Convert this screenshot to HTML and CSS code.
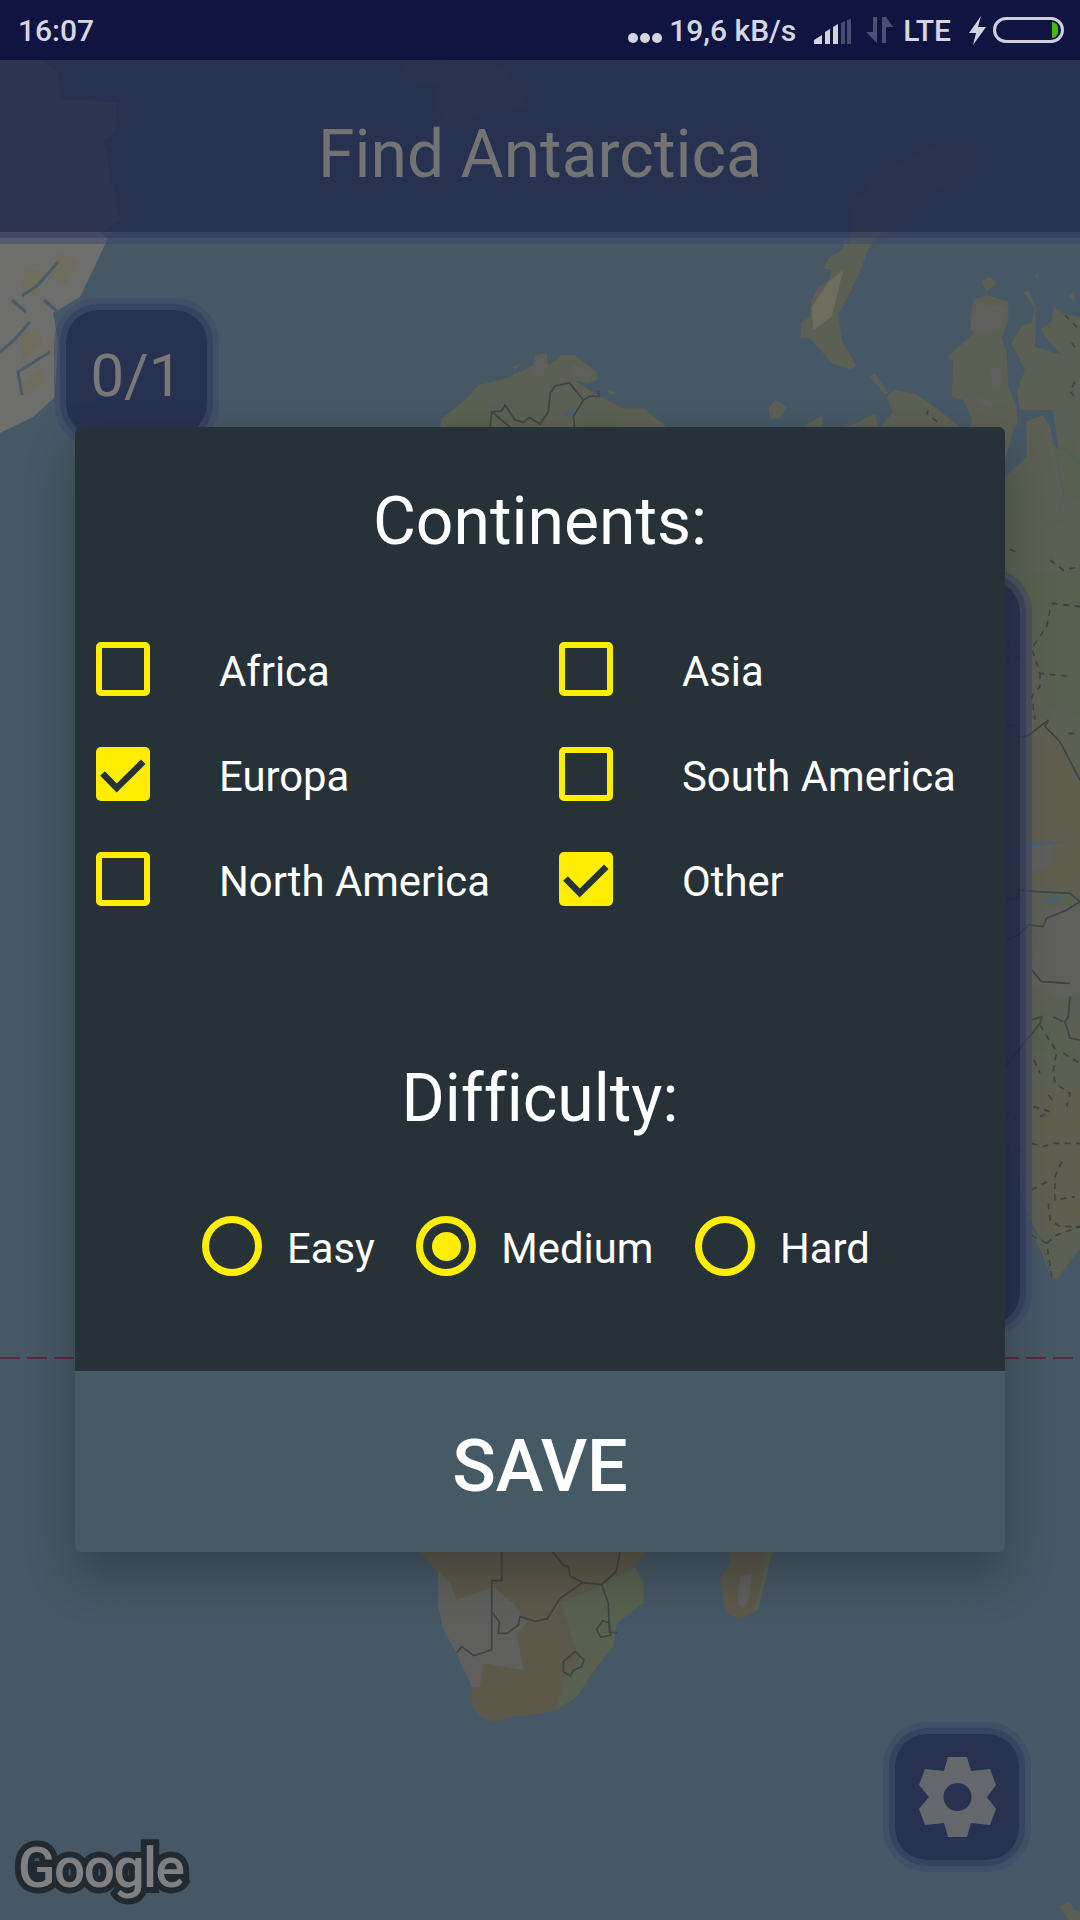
FILE: index.html
```html
<!DOCTYPE html>
<html lang="en">
<head>
  <meta charset="UTF-8">
  <title>Find Antarctica</title>
  <link rel="stylesheet" href="styles.css">
</head>
<body>
  <div class="screen">
    <!-- map behind everything -->
    <svg class="map" width="1080" height="1920" viewBox="0 0 1080 1920">
      <!-- greenland -->
      <path class="ice" d="M0 60H40L56 70L60 100L86 100L117 103L114 133L103 140L120 220L100 233L108 238L93 270L80 297L53 313L58 340L55 397L33 417L0 433Z"/>
      <path class="tan" d="M58 250L78 262L66 285L50 278ZM26 268L44 272L38 296L20 290ZM20 335L38 328L42 346L22 360ZM40 365L46 380L26 395L22 384Z"/>
      <path class="fjord" d="M44 300L58 312M58 262L38 285L22 296M0 352L14 340L30 322M22 395L18 372L50 352M12 300L26 312"/>
      <!-- svalbard and the arctic islands under the bar -->
      <path class="land" d="M400 62L413 83L441 83L434 103L448 127L482 113L530 107L503 67L475 60Z"/>
      <path class="land" d="M850 244L855 200L890 170L945 143L970 145L968 170L905 210L870 245Z"/>
      <!-- scandinavia above the dialog -->
      <g transform="translate(400 340) scale(.33333)">
        <path class="land" d="M120 270L125 235L190 185L235 135L260 130L320 115L400 75L405 45L440 40L445 75L470 60L480 45L525 45L590 95L590 120L560 130L520 120L610 175L670 205L730 205L810 270ZM335 80L365 70L345 90ZM625 150L650 158L630 165Z"/>
        <path class="green" d="M190 190L250 170L300 230L270 270L130 270ZM540 210L660 210L670 270L530 270Z"/>
        <path class="grey" d="M410 60L440 50L430 110L380 110ZM520 70L585 100L560 125L510 100Z"/>
        <path class="water" d="M490 225L525 200L520 230Z"/>
        <path class="line" d="M270 270L275 215L305 213L315 195L345 240L370 248L388 232L420 252L445 215L450 160L465 138L508 128L550 180L520 230L525 270M550 180L570 168L597 170L595 152M275 215L340 270"/>
      </g>
      <!-- top right, traced at 3x -->
      <g transform="translate(760 240) scale(.33333)">
        <path class="land" d="M250 10L330 15L300 95L255 190L235 220L245 300L290 378L270 388L215 370L190 340L150 295L122 295L122 250L150 230L155 180L175 140L205 125L215 90L190 85L210 50L250 30Z"/>
        <path class="tan" d="M205 125L250 90L235 150L215 230L160 270L155 200Z"/>
        <path class="land" d="M330 410L345 400L385 460L375 465ZM25 505L45 480L80 500L60 535L30 535ZM130 560L190 525L185 560ZM240 560L290 550L345 520L355 560ZM665 125L690 110L710 130L680 155ZM925 170L940 155L945 185ZM825 108L840 102L830 115Z"/>
        <path class="land" d="M365 560L398 515L380 470L405 450L460 460L510 490L600 560Z"/>
        <path class="land" d="M565 350L640 280L630 240L640 180L680 165L745 185L745 240L725 295L740 340L745 440L770 500L772 550L760 570L735 660L735 800L400 800L632 560L635 535L610 480L575 470L580 365Z"/>
        <path class="land" d="M755 310L785 255L815 250L825 205L790 155L805 152L828 205L825 320L905 345L850 285L845 265L875 245L880 200L920 225L960 230L960 960L735 960L735 710L800 650L800 560L795 545L850 525L870 560L880 610L895 630L880 510L800 510L780 510L770 460L795 390Z"/>
        <path class="grey" d="M650 190L735 200L730 260L680 280L630 270ZM690 380L730 380L725 440L695 445ZM650 465L700 490L690 505L655 490Z"/>
        <path class="green" d="M735 745L800 755L790 810L735 790ZM885 640L930 590L960 650L960 780L915 770L905 680ZM850 860L900 810L915 850Z"/>
        <path class="fjord" d="M885 625L920 630L960 670M890 650L900 710L912 760L900 810"/>
        <path class="dash" d="M915 225L960 270M935 310L945 322M945 425L930 455L945 470M505 510L500 520L540 552M750 928L800 950L870 955"/>
      </g>
      <!-- central asia strip -->
      <g transform="translate(960 560) scale(.33333)">
        <path class="land" d="M130 -20H360V1210H130Z"/>
        <path class="green" d="M130 50L360 30L360 470L260 440L240 300L130 210Z"/>
        <path class="desert" d="M130 530L260 500L360 650L360 990L130 990Z"/>
        <path class="grey" d="M200 860L280 850L280 910L200 940ZM260 1040L360 1040L360 1200L220 1200Z"/>
        <path class="water" d="M165 880L200 845L330 845L250 855L205 860L190 900ZM255 1015L300 1012L285 1030L265 1028Z"/>
        <path class="line" d="M135 490L175 505L170 530L200 530L265 480L255 500L300 545L360 660M132 1015L170 1018L175 990L230 995L330 1000L360 1025L320 1050L260 1075L250 1100L205 1095L175 1125L132 1142"/>
        <path class="dash" d="M270 0L310 30L360 20M275 130L360 140M270 150L260 200L215 265L240 340L335 350M240 340L240 380L215 410L225 480M325 520L345 520M132 250L175 250M132 295L180 290"/>
      </g>
      <!-- india -->
      <g transform="translate(960 960) scale(.33333)">
        <path class="land" d="M130 0L360 0L360 870L340 890L290 960L275 950L250 850L215 790L135 520L130 520Z"/>
        <path class="desert" d="M215 380L360 380L360 800L290 830L240 780L215 600Z"/>
        <path class="green" d="M215 130L290 200L360 290L360 320L290 270L215 280ZM215 810L250 850L270 950L255 900Z"/>
        <path class="grey" d="M215 0L360 0L360 100L290 120L215 70Z"/>
        <path class="line" d="M215 30L245 65L330 70M330 110L325 170L315 185L330 235L360 240M280 170L310 185M132 325L180 265L240 190L245 170L215 180"/>
        <path class="dash" d="M240 195L290 275L280 330L285 370L330 400L320 440M310 280L360 310M215 550L250 560L280 550L360 550M305 605L285 650L285 720L345 710M215 690L270 660M265 730L270 780L300 800L360 800M215 825L260 850L275 950M260 850L290 825L360 800M220 440L270 455L230 475M222 300L240 340M132 450L170 480M265 405L285 430M140 590L180 570"/>
        <path class="sea" d="M132 530L180 720L215 790L215 1100L132 1100Z"/>
      </g>
      <path class="equator" d="M0 1358H1080"/>
      <!-- southern africa -->
      <g transform="translate(400 1540) scale(.33333)">
        <path class="land-warm" d="M55 0L60 36L115 100L115 200L130 270L165 330L215 440L215 490L240 530L280 545L340 530L400 525L470 510L530 470L590 380L640 320L650 250L730 190L730 130L705 80L735 36L735 0Z"/>
        <path class="grey" d="M115 90L150 130L170 180L280 140L340 190L380 250L350 280L370 390L250 370L240 440L215 440L165 330L130 270L115 200Z"/>
        <path class="green" d="M480 190L620 130L705 80L730 130L730 190L650 250L640 320L590 380L530 470L470 510L490 420L540 360L500 250Z"/>
        <path class="land-warm" d="M990 0L1125 0L1070 215L1015 235L980 220L960 120L990 70Z"/>
        <path class="grey" d="M1020 110L1055 100L1050 170L1030 205L1012 190Z"/>
        <path class="green" d="M1095 0L1125 0L1075 210L1060 210L1090 110Z"/>
        <path class="line" d="M305 0L305 122L275 122L275 330L222 347L185 320L170 338M275 215L298 245L295 280L322 280L355 255L360 230L405 244L442 236L480 175L548 128L605 134L648 95L658 50L658 0M458 36L490 75L505 80L510 108L548 128M605 134L625 190L628 278M628 278L652 278M608 242L628 250L632 285L602 292L590 268ZM526 335L552 360L545 380L518 392L512 408L490 395L490 365Z"/>
      </g>
      <path class="land" d="M1068 1920L1060 1906L1070 1902L1074 1910L1082 1912L1080 1920Z"/>
    </svg>

    <div class="status">
      <span class="time">16:07</span>
      <div class="status-right">
        <span class="dots"><i></i><i></i><i></i></span>
        <span class="speed">19,6 kB/s</span>
        <svg class="ic-signal" width="37" height="25" viewBox="0 0 37 25">
          <path fill="#d2d2de" d="M0 25V21L8 16V25ZM11 25V13L16 10V25ZM19 25V8L24 5V25Z"/>
          <path fill="#474c70" d="M27 25V4L31 2V25ZM33 25V1L37 0V25Z"/>
        </svg>
        <svg class="ic-arrows" width="27" height="27" viewBox="0 0 27 27">
          <path fill="#4b5074" d="M7 0H11V26L0 15H7ZM16 26V0H20L27 10H20V26Z"/>
        </svg>
        <span class="net">LTE</span>
        <svg class="ic-bolt" width="17" height="29" viewBox="0 0 17 29">
          <path fill="#d2d2de" d="M12 0L0 17H7L4 29L17 11H9Z"/>
        </svg>
        <div class="battery"><div class="battery-level"></div></div>
      </div>
    </div>

    <div class="appbar">
      <h1>Find Antarctica</h1>
    </div>

    <div class="float score">0/1</div>
    <div class="float side"></div>
    <div class="float gear">
      <svg width="77" height="80" viewBox="0 0 77 80">
        <path fill="#66676d" fill-rule="evenodd" d="M29 0H48L52 14L71 12L77 28L68 40L77 52L71 68L52 66L48 80H29L25 66L6 68L0 52L10 40L0 28L6 12L25 14ZM38.500 26a14 14 0 1 0 0 28a14 14 0 1 0 0-28Z"/>
      </svg>
    </div>
    <div class="google">Google</div>

    <div class="dialog">
      <div class="dialog-body">
        <h2>Continents:</h2>
        <div class="options">
          <label class="opt"><span class="check"></span>Africa</label>
          <label class="opt"><span class="check"></span>Asia</label>
          <label class="opt">
            <span class="check on"><svg width="54" height="54" viewBox="0 0 54 54"><path d="M6.500 26.500L20.700 41L47.300 14.700"/></svg></span>Europa
          </label>
          <label class="opt"><span class="check"></span>South America</label>
          <label class="opt"><span class="check"></span>North America</label>
          <label class="opt">
            <span class="check on"><svg width="54" height="54" viewBox="0 0 54 54"><path d="M6.500 26.500L20.700 41L47.300 14.700"/></svg></span>Other
          </label>
        </div>
        <h2 class="difficulty">Difficulty:</h2>
        <div class="levels">
          <label class="level"><span class="radio"></span><span class="level-name">Easy</span></label>
          <label class="level"><span class="radio on"></span><span class="level-name">Medium</span></label>
          <label class="level"><span class="radio"></span><span class="level-name">Hard</span></label>
        </div>
      </div>
      <button class="save">SAVE</button>
    </div>
  </div>
</body>
</html>
```

FILE: styles.css
```css
* {
  box-sizing: border-box;
}

body {
  margin: 0;
  font-family: Roboto, "Noto Sans", sans-serif;
}

.screen {
  position: relative;
  width: 1080px;
  height: 1920px;
  overflow: hidden;
  background-color: #465865;
}

/* map */
.map {
  position: absolute;
  top: 0;
  left: 0;
}

.ice { fill: #6e6e6d; }
.tan { fill: #6e6d5e; }
.land { fill: #5c5f53; }
.land-warm { fill: #5c594b; }
.grey { fill: #5f5f5d; }
.green { fill: #586150; }
.desert { fill: #5f5e4f; }
.water { fill: #4a5f72; }
.sea { fill: #465865; }

.fjord {
  fill: none;
  stroke: #4b5b66;
  stroke-width: 3;
}

.line {
  fill: none;
  stroke: #3d4444;
  stroke-width: 5;
}

.dash {
  fill: none;
  stroke: #404246;
  stroke-width: 5;
  stroke-dasharray: 18 16;
}

.equator {
  stroke: #5c2a38;
  stroke-width: 2;
  stroke-dasharray: 20 7;
}

/* status bar */
.status {
  position: relative;
  display: flex;
  justify-content: space-between;
  align-items: center;
  height: 60px;
  padding: 0 16px 0 18px;
  background-color: #0f1540;
  color: #d6d6e2;
  font-size: 30px;
  font-weight: 500;
}

.status-right {
  display: flex;
  align-items: center;
}

.dots {
  display: flex;
  gap: 2px;
  margin-top: 16px;
  margin-right: 7px;
}

.dots i {
  width: 10px;
  height: 10px;
  border-radius: 50%;
  background-color: #d6d6e2;
}

.ic-signal { margin-left: 18px; margin-top: 2px; }
.ic-arrows { margin-left: 15px; }
.net { margin-left: 10px; }
.ic-bolt { margin-left: 18px; }

.battery {
  display: flex;
  justify-content: flex-end;
  align-items: center;
  width: 71px;
  height: 26px;
  margin-left: 7px;
  padding-right: 3px;
  border: 3px solid #d0d0dc;
  border-radius: 13px;
}

.battery-level {
  width: 6px;
  height: 16px;
  border-radius: 0 8px 8px 0;
  background-color: #44bb00;
}

/* title bar, the two rings under it are part of the background */
.appbar {
  position: relative;
  display: flex;
  justify-content: center;
  align-items: center;
  height: 184px;
  padding-top: 4px;
  background: linear-gradient(
    rgba(33, 43, 76, 0.85) 172px,
    rgba(49, 58, 95, 0.7) 172px 178px,
    rgba(60, 70, 105, 0.5) 178px
  );
}

.appbar h1 {
  margin: 0;
  font-size: 66px;
  font-weight: 400;
  color: #737373;
}

/* floating buttons on the map */
.float {
  position: absolute;
  display: flex;
  justify-content: center;
  align-items: center;
  background-color: rgba(33, 43, 76, 0.85);
  background-clip: padding-box;
  border: 6px solid rgba(49, 58, 95, 0.7);
  border-radius: 38px;
  box-shadow: 0 0 0 6px rgba(60, 70, 105, 0.5);
}

.score {
  left: 60px;
  top: 304px;
  width: 153px;
  height: 138px;
  padding-top: 5px;
  font-size: 60px;
  color: #787878;
}

.side {
  left: 880px;
  top: 574px;
  width: 146px;
  height: 757px;
}

.gear {
  left: 889px;
  top: 1728px;
  width: 136px;
  height: 138px;
}

.google {
  position: absolute;
  left: 18px;
  top: 1836px;
  font-size: 55px;
  font-weight: 500;
  letter-spacing: -1.500px;
  color: #808080;
  -webkit-text-stroke: 12px #222a31;
  paint-order: stroke fill;
}

/* dialog */
.dialog {
  position: absolute;
  left: 75px;
  top: 427px;
  display: flex;
  flex-direction: column;
  width: 930px;
  height: 1125px;
  border-radius: 6px;
  box-shadow: 0 24px 48px rgba(0, 0, 0, 0.25);
}

.dialog-body {
  flex: 1;
  padding: 57px 21px 0;
  border-radius: 6px 6px 0 0;
  background-color: #273238;
  color: white;
}

h2 {
  margin: 0;
  font-size: 66px;
  font-weight: 400;
  font-variant-ligatures: none;
  line-height: 76px;
  text-align: center;
}

.options {
  display: grid;
  grid-template-columns: 463px 1fr;
  grid-auto-rows: 105px;
  margin-top: 82px;
}

.opt {
  display: flex;
  align-items: flex-start;
  gap: 69px;
  font-size: 41.800px;
  line-height: 60px;
}

.check {
  width: 54px;
  height: 54px;
  border: 6px solid #ffee00;
  border-radius: 5px;
}

.check.on {
  border: none;
  background-color: #ffee00;
}

.check svg {
  display: block;
  fill: none;
  stroke: #273238;
  stroke-width: 6.500;
}

.difficulty {
  margin-top: 104px;
}

.levels {
  display: flex;
  gap: 41.500px;
  margin-top: 79px;
  padding-left: 106px;
}

.level {
  display: flex;
  align-items: center;
  gap: 25px;
  font-size: 41.800px;
}

.level-name {
  margin-top: 5px;
}

.radio {
  display: flex;
  justify-content: center;
  align-items: center;
  width: 60px;
  height: 60px;
  border: 7px solid #ffee00;
  border-radius: 50%;
}

.radio.on::after {
  content: "";
  width: 29px;
  height: 29px;
  border-radius: 50%;
  background-color: #ffee00;
}

.save {
  height: 181px;
  padding-top: 10px;
  border: none;
  border-radius: 0 0 6px 6px;
  background-color: #465a66;
  color: white;
  font-family: inherit;
  font-size: 72px;
  font-weight: 500;
}
```
